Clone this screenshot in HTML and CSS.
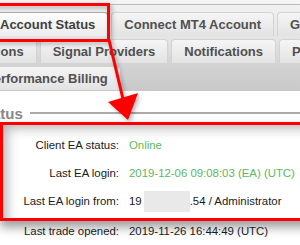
FILE: index.html
```html
<!DOCTYPE html>
<html>
<head>
    <title>Account Status</title>
    <link rel="stylesheet" href="styles.css">
</head>
<body>
    <div class="page">
        <div class="tabs">
            <div class="tab-row row-1">
                <a class="tab active">Account Status</a>
                <a class="tab">Connect MT4 Account</a>
                <a class="tab">Global Settings</a>
            </div>
            <div class="tab-row row-2">
                <a class="tab">Subscriptions</a>
                <a class="tab">Signal Providers</a>
                <a class="tab">Notifications</a>
                <a class="tab">Payments</a>
            </div>
            <div class="tab-row row-3">
                <a class="tab">Performance Billing</a>
            </div>
        </div>

        <div class="panel">
            <div class="legend">
                <span class="legend-text">Status</span>
                <span class="legend-line"></span>
            </div>

            <div class="highlight">
                <div class="info-row">
                    <span class="label">Client EA status:</span>
                    <span class="value green">Online</span>
                </div>
                <div class="info-row">
                    <span class="label">Last EA login:</span>
                    <span class="value green">2019-12-06 09:08:03 (EA) (UTC)</span>
                </div>
                <div class="info-row">
                    <span class="label">Last EA login from:</span>
                    <span class="value">19<span class="redacted"></span>.54 / Administrator</span>
                </div>
            </div>

            <div class="info-row outside">
                <span class="label">Last trade opened:</span>
                <span class="value">2019-11-26 16:44:49 (UTC)</span>
            </div>
        </div>

        <!-- annotation drawn over the screenshot -->
        <div class="callout"></div>
        <svg class="arrow" width="300" height="245" viewBox="0 0 300 245">
            <line x1="109" y1="40" x2="123" y2="99" stroke="#f00" stroke-width="3"/>
            <polygon points="108,102 138,93 128,120" fill="#f00"/>
        </svg>
    </div>
</body>
</html>
```

FILE: styles.css
```css
* {
    margin: 0;
    padding: 0;
    box-sizing: border-box;
}

html, body {
    overflow: hidden;
}

body {
    width: 300px;
    height: 245px;
    background-color: #f4f4f4;
    font-family: "Liberation Sans", Arial, sans-serif;
}

.page {
    position: relative;
    padding-top: 4px;
    height: 245px;
}

/* tab strip */
.tabs {
    display: flex;
    flex-direction: column;
    gap: 3px;
    padding: 7px 0 1px;
    border-top: 1px solid #bbb;
    background: linear-gradient(#f1f1f1 0, #e4e4e4 35px, #d3d3d3 60px, #c8c8c8 87px);
}

.tab-row {
    display: flex;
    gap: 3px;
    white-space: nowrap;
}

.row-1 {
    margin-left: -13px;
}

.row-2 {
    margin-left: -76px;
}

.row-3 {
    margin-left: -28px;
}

.tab {
    flex: none;
    height: 24px;
    line-height: 23px;
    padding: 0 12px;
    border: 1px solid #d3d3d3;
    border-bottom: none;
    border-radius: 4px 4px 0 0;
    background: linear-gradient(#f5f5f5, #e3e3e3);
    color: #505050;
    font-size: 13px;
    font-weight: bold;
}

.tab.active {
    border-color: #aaa;
    background: linear-gradient(#fdfdfd, #ececec);
    color: #404040;
}

/* panel */
.panel {
    background-color: #fff;
    padding-top: 13px;
    height: 154px;
}

.legend {
    display: flex;
    align-items: center;
    height: 18px;
    margin-left: -23px;
}

.legend-text {
    padding-right: 7px;
    color: #888;
    font-size: 15px;
    font-weight: bold;
}

.legend-line {
    flex: 1;
    border-top: 2px solid #aaa;
}

.highlight {
    margin-right: -30px;
    padding: 6px 0 3px;
    border: 3px solid #f00;
    background-color: #fff;
    box-shadow: inset 10px 9px 12px -6px rgba(0,0,0,0.3), 0 6px 10px rgba(0,0,0,0.4);
}

.info-row {
    display: flex;
    align-items: center;
    height: 28px;
    color: #1a1a1a;
    font-size: 11.4px;
}

.info-row.outside {
    height: 20px;
    padding-left: 3px;
}

.label {
    flex: none;
    width: 116px;
    text-align: right;
}

.value {
    display: flex;
    align-items: center;
    margin-left: 10px;
    white-space: nowrap;
}

.green {
    color: #5cb85c;
}

.redacted {
    display: inline-block;
    width: 46px;
    height: 21px;
    margin-left: 2px;
    background-color: #e9e9e9;
    filter: blur(0.6px);
}

/* red annotation */
.callout {
    position: absolute;
    left: -10px;
    top: 3px;
    width: 120px;
    height: 39px;
    border: 3px solid #f00;
    filter: drop-shadow(2px 2px 2px rgba(0,0,0,0.3));
}

.arrow {
    position: absolute;
    left: 0;
    top: 0;
    filter: drop-shadow(2px 2px 2px rgba(0,0,0,0.3));
}
```
